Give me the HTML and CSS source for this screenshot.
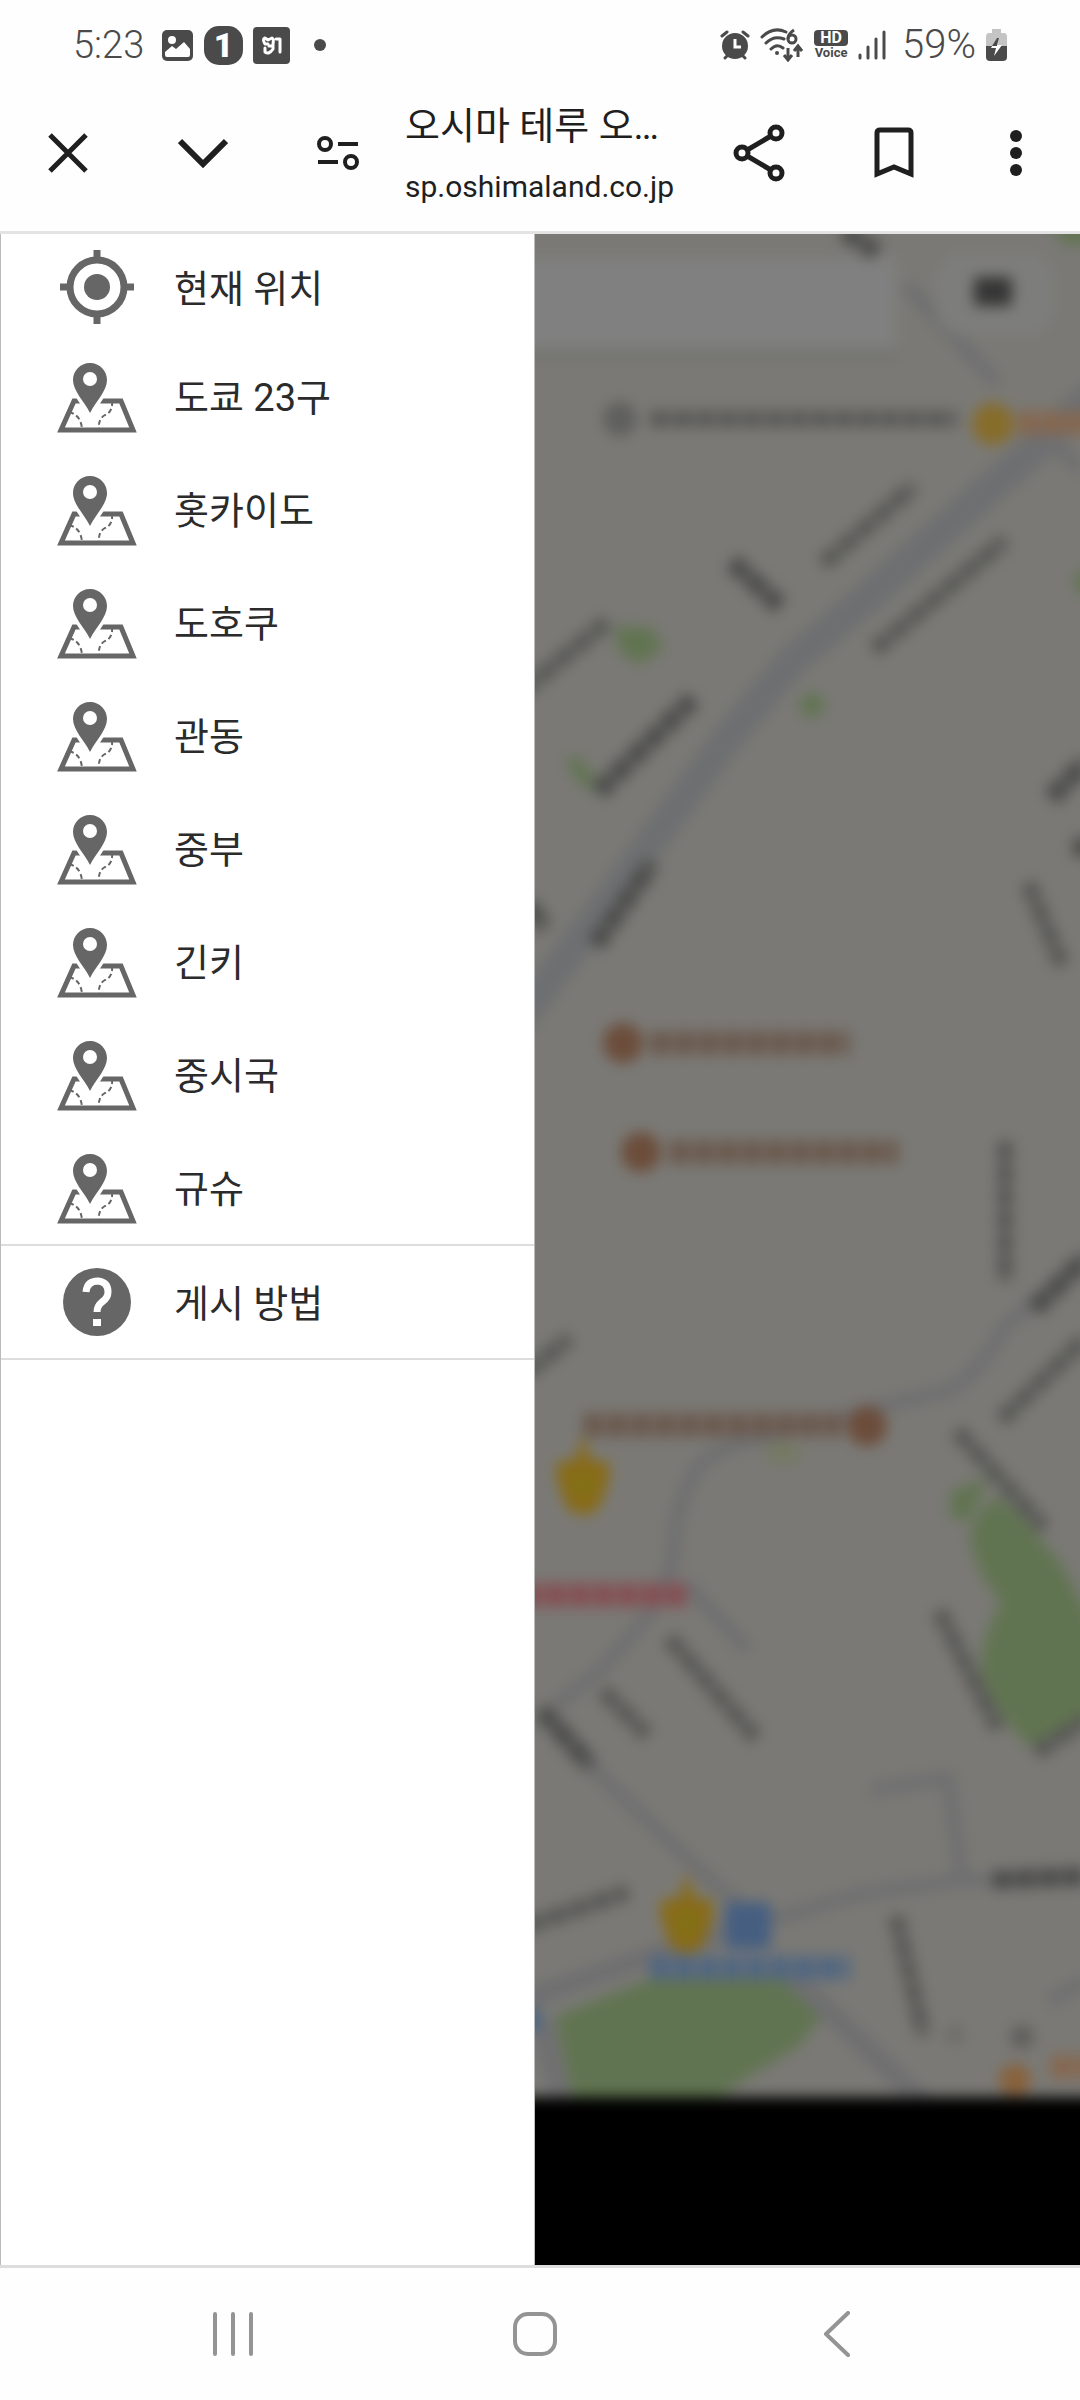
FILE: index.html
```html
<!DOCTYPE html>
<html lang="ko">
<head>
    <meta charset="UTF-8">
    <meta name="viewport" content="width=device-width, initial-scale=1.0">
    <title>오시마 테루</title>
    <link rel="stylesheet" href="styles.css">
</head>
<body>
    <!-- shared drawer icon -->
    <svg class="defs" width="0" height="0" aria-hidden="true">
        <symbol id="icon-map" viewBox="0 -1 80 72">
            <path d="M17 39H64L76 68H4Z" fill="none" stroke="#666" stroke-width="5"/>
            <path d="M12 50Q24 53 25 67M55 39Q56 50 48 53Q41 57 42 67" fill="none" stroke="#666" stroke-width="2" stroke-dasharray="5 3"/>
            <path d="M33 1C23 1 16 9 16 18C16 29 27 39 33 51C39 39 50 29 50 18C50 9 43 1 33 1Z" fill="#666" stroke="#fff" stroke-width="7" paint-order="stroke"/>
            <circle cx="33" cy="17" r="7" fill="#fff"/>
        </symbol>
    </svg>

    <div class="status-bar">
        <div class="status-left">
            <span class="status-text">5:23</span>
            <svg width="32" height="32" viewBox="0 0 32 32">
                <rect width="31" height="31" y="1" rx="5" fill="#4a4a4a"/>
                <circle cx="10" cy="11" r="4" fill="#fff"/>
                <path d="M3 23L10 17L14 20L22 13L28 20V26Q28 28 26 28H5Q3 28 3 26Z" fill="#fff"/>
            </svg>
            <span class="badge-one">1</span>
            <svg width="37" height="37" viewBox="0 0 37 37">
                <rect width="37" height="37" rx="4" fill="#4a4a4a"/>
                <path d="M15 17H12Q9 12 12 11L15 13L19 11Q21 12 20 17V22Q16 28 12 25V21M16 19H20M23 12H27V25" fill="none" stroke="#fff" stroke-width="3" stroke-linejoin="round" stroke-linecap="round"/>
            </svg>
            <span class="status-dot"></span>
        </div>
        <div class="status-right">
            <svg width="30" height="30" viewBox="0 0 30 30">
                <path d="M2 6L7 2M28 6L23 2M5 28L8 25M25 28L22 25" stroke="#4a4a4a" stroke-width="3" stroke-linecap="round"/>
                <circle cx="15" cy="16" r="13" fill="#4a4a4a"/>
                <path d="M15 9V17H21" fill="none" stroke="#fff" stroke-width="3"/>
            </svg>
            <svg width="44" height="34" viewBox="0 0 44 34">
                <path d="M2 9Q13 -2 26 4M6 15Q14 7 24 11M11 21Q17 15 23 20" fill="none" stroke="#4a4a4a" stroke-width="3" stroke-linecap="round"/>
                <circle cx="17" cy="25" r="2" fill="#4a4a4a"/>
                <path d="M34 2Q28 6 28 11" fill="none" stroke="#4a4a4a" stroke-width="3"/>
                <circle cx="32" cy="11" r="4" fill="none" stroke="#4a4a4a" stroke-width="3"/>
                <path d="M28 20V31M24 27L28 32L32 27M38 29V19M34 23L38 18L42 23" fill="none" stroke="#4a4a4a" stroke-width="3"/>
            </svg>
            <div class="hd-voice"><span class="hd">HD</span><span class="voice">Voice</span></div>
            <svg width="28" height="30" viewBox="0 0 28 30">
                <path d="M2 25V28M10 17V28M18 9V28M26 2V28" stroke="#4a4a4a" stroke-width="3" stroke-linecap="round"/>
            </svg>
            <span class="status-text battery-text">59%</span>
            <svg width="21" height="32" viewBox="0 0 21 32">
                <path d="M6 0H15V4H18Q21 4 21 8V18H0V8Q0 4 3 4H6Z" fill="#c4c4c4"/>
                <path d="M0 17H21V28Q21 32 17 32H4Q0 32 0 28Z" fill="#4a4a4a"/>
                <path d="M11 9L5 19H10L8 27L16 16H11L13 9Z" fill="#fff"/>
                <path d="M11 9L6 17H11V16L13 9Z" fill="#4a4a4a"/>
            </svg>
        </div>
    </div>

    <header class="toolbar">
        <button class="tool" aria-label="닫기">
            <svg width="40" height="40" viewBox="0 0 40 40"><path d="M2 2L38 38M38 2L2 38" stroke="#1f1f1f" stroke-width="5"/></svg>
        </button>
        <button class="tool" aria-label="접기">
            <svg width="50" height="30" viewBox="0 0 50 30"><path d="M2 3L25 26L48 3" fill="none" stroke="#1f1f1f" stroke-width="6"/></svg>
        </button>
        <button class="tool" aria-label="사이트 설정">
            <svg width="44" height="36" viewBox="0 0 44 36">
                <g fill="none" stroke="#1f1f1f" stroke-width="4">
                    <circle cx="9" cy="9" r="6"/>
                    <circle cx="35" cy="27" r="6"/>
                    <path d="M22 9H42M2 27H22"/>
                </g>
            </svg>
        </button>
        <div class="page-info">
            <div class="page-title">오시마 테루 오…</div>
            <div class="page-url">sp.oshimaland.co.jp</div>
        </div>
        <button class="tool" aria-label="공유">
            <svg width="52" height="58" viewBox="0 0 52 58">
                <path d="M43 9L9 29L43 49" fill="none" stroke="#1f1f1f" stroke-width="5"/>
                <g fill="#fff" stroke="#1f1f1f" stroke-width="5">
                    <circle cx="43" cy="9" r="6"/>
                    <circle cx="9" cy="29" r="6"/>
                    <circle cx="43" cy="49" r="6"/>
                </g>
            </svg>
        </button>
        <button class="tool" aria-label="북마크">
            <svg width="40" height="52" viewBox="0 0 40 52"><path d="M3 47V6Q3 3 6 3H34Q37 3 37 6V47L20 40Z" fill="none" stroke="#1f1f1f" stroke-width="5"/></svg>
        </button>
        <button class="tool tool-more" aria-label="메뉴">
            <svg width="12" height="48" viewBox="0 0 12 48" fill="#1f1f1f">
                <circle cx="6" cy="7" r="6"/>
                <circle cx="6" cy="24" r="6"/>
                <circle cx="6" cy="41" r="6"/>
            </svg>
        </button>
    </header>

    <main class="content">
        <nav class="drawer">
            <a class="item" href="#">
                <svg width="80" height="76" viewBox="0 0 80 76">
                    <circle cx="40" cy="38" r="27" fill="none" stroke="#666" stroke-width="7"/>
                    <circle cx="40" cy="38" r="13" fill="#666"/>
                    <path d="M40 1V10M40 66V75M3 38H12M68 38H77" stroke="#666" stroke-width="7"/>
                </svg>
                <span>현재 위치</span>
            </a>
            <a class="item" href="#"><svg width="80" height="72"><use href="#icon-map"/></svg><span>도쿄 23구</span></a>
            <a class="item" href="#"><svg width="80" height="72"><use href="#icon-map"/></svg><span>홋카이도</span></a>
            <a class="item" href="#"><svg width="80" height="72"><use href="#icon-map"/></svg><span>도호쿠</span></a>
            <a class="item" href="#"><svg width="80" height="72"><use href="#icon-map"/></svg><span>관동</span></a>
            <a class="item" href="#"><svg width="80" height="72"><use href="#icon-map"/></svg><span>중부</span></a>
            <a class="item" href="#"><svg width="80" height="72"><use href="#icon-map"/></svg><span>긴키</span></a>
            <a class="item" href="#"><svg width="80" height="72"><use href="#icon-map"/></svg><span>중시국</span></a>
            <a class="item" href="#"><svg width="80" height="72"><use href="#icon-map"/></svg><span>규슈</span></a>
            <a class="item item-help" href="#">
                <svg width="80" height="68" viewBox="0 0 80 68">
                    <circle cx="40" cy="34" r="34" fill="#666"/>
                    <path d="M29 24Q30 13 41 13Q51 14 51 24Q51 30 45 34Q40 38 40 44" fill="none" stroke="#fff" stroke-width="7"/>
                    <rect x="36" y="51" width="8" height="7" fill="#fff"/>
                </svg>
                <span>게시 방법</span>
            </a>
        </nav>

        <!-- map behind the drawer, dimmed and blurred -->
        <div class="map">
            <svg class="map-canvas" viewBox="534 234 546 2031" preserveAspectRatio="xMinYMin slice" aria-hidden="true">
                <defs>
                    <filter id="haze" filterUnits="userSpaceOnUse" x="440" y="140" width="740" height="2200" color-interpolation-filters="sRGB">
                        <feGaussianBlur stdDeviation="7"/>
                    </filter>
                </defs>
                <g filter="url(#haze)">
                    <rect x="440" y="140" width="740" height="1957" fill="#7a7975"/>
                    <!-- parks -->
                    <g fill="#617451">
                        <path d="M996 1496Q966 1520 970 1545Q980 1580 1000 1603Q978 1640 980 1673Q998 1720 1028 1746L1100 1710V1640L1060 1563L1021 1517Z"/>
                        <path d="M554 2016L646 1980H783Q810 1996 820 2018L797 2047L747 2077L700 2110H574Z"/>
                        <path d="M614 626L652 628L662 650L638 664L618 652Z"/>
                        <circle cx="811" cy="705" r="12"/>
                        <path d="M564 762L578 756L596 782L584 790Z"/>
                        <path d="M951 1490L987 1478L968 1522L948 1516Z"/>
                        <path d="M1048 225H1100V244H1064Z"/>
                        <circle cx="1086" cy="582" r="12"/>
                        <ellipse cx="782" cy="1453" rx="18" ry="10" fill="#747a60"/>
                    </g>
                    <!-- roads -->
                    <g class="roads">
                        <path class="road-main" d="M1110 380L1021 460L944 528L867 597L790 662L726 739L670 815L576 943L510 1030"/>
                        <path d="M905 285L996 383M1050 440L1080 470M1090 1255L1003 1327Q985 1365 950 1390L898 1402L740 1443Q695 1455 685 1490L676 1517L670 1570L646 1617L600 1670L555 1705"/>
                        <path d="M684 1583L747 1650M540 1710L590 1767L712 1883L745 1910M720 1925L775 1918L863 1893L961 1880H1090M870 1790L947 1778L960 1873"/>
                        <path class="road-wide" d="M520 2000L649 1957L720 1935M790 1975L930 2110M540 2020L560 2100"/>
                        <path d="M1048 2002L1085 1980"/>
                    </g>
                    <rect x="440" y="345" width="455" height="14" fill="#73736f"/>
                    <rect x="440" y="258" width="455" height="91" fill="#808080"/>
                    <rect x="934" y="252" width="120" height="84" rx="30" fill="#7d7d7b"/>
                    <rect x="973" y="277" width="38" height="29" rx="4" fill="#363636"/>
                    <!-- street names -->
                    <g class="labels">
                        <path d="M822 564L913 486M873 650L1004 540M520 692L606 622M649 419H956M1027 883L1061 965M1004 1141V1282"/>
                        <path d="M956 1431L1043 1528M1000 1420L1085 1338M938 1611L997 1729M668 1638L755 1738M602 1691L646 1735M1035 1753L1085 1720"/>
                        <path d="M525 1926L627 1892M895 1916L919 2020L922 2035M525 1373L569 1338"/>
                    </g>
                    <g class="labels labels-bold">
                        <path d="M731 562L779 606M597 792L692 699M594 945L651 863M1050 798L1085 762M525 905L544 927M1072 847H1090"/>
                        <path d="M1033 1309L1085 1258M540 1710L590 1766M992 1880L1085 1876M843 230L876 252"/>
                    </g>
                    <circle cx="619" cy="419" r="17" fill="#5f5f5d"/>
                    <circle cx="954" cy="2035" r="9" fill="#6b6b69"/>
                    <circle cx="1021" cy="2037" r="12" fill="#5f5f5d"/>
                    <!-- places -->
                    <g class="places">
                        <path d="M649 1043H849M668 1152H897M582 1425H841" stroke="#6b594e"/>
                        <path d="M520 1595H688" stroke="#854f53"/>
                        <path d="M649 1968H849M520 2020H540" stroke="#506681"/>
                        <path d="M1017 423H1090M1050 2067H1090" stroke="#86674e"/>
                    </g>
                    <g fill="#6c4d3b">
                        <circle cx="622" cy="1043" r="20"/>
                        <circle cx="640" cy="1152" r="20"/>
                        <circle cx="866" cy="1426" r="20"/>
                    </g>
                    <circle cx="992" cy="424" r="21" fill="#876d2b"/>
                    <circle cx="1014" cy="2080" r="16" fill="#88623c"/>
                    <rect x="724" y="1902" width="46" height="47" rx="6" fill="#465f81"/>
                    <g fill="#886b18">
                        <path d="M582 1434L590 1461H608V1480L599 1506Q582 1524 565 1506L556 1480V1461H574Z"/>
                        <path d="M686 1872L694 1899H712V1918L703 1944Q686 1962 669 1944L660 1918V1899H678Z"/>
                    </g>
                    <g fill="#7f7514">
                        <circle cx="582" cy="1485" r="9"/>
                        <circle cx="686" cy="1923" r="9"/>
                    </g>
                    <rect x="440" y="2097" width="740" height="240" fill="#000"/>
                </g>
            </svg>
        </div>
    </main>

    <footer class="nav-bar">
        <button class="nav-button" aria-label="최근 앱">
            <svg width="42" height="44" viewBox="0 0 42 44"><path d="M3 2V42M21 2V42M39 2V42" stroke="#949494" stroke-width="4" stroke-linecap="round"/></svg>
        </button>
        <button class="nav-button" aria-label="홈">
            <svg width="44" height="44" viewBox="0 0 44 44"><rect x="2" y="2" width="40" height="40" rx="13" fill="none" stroke="#949494" stroke-width="4"/></svg>
        </button>
        <button class="nav-button" aria-label="뒤로">
            <svg width="28" height="46" viewBox="0 0 28 46"><path d="M25 2L3 23L25 44" fill="none" stroke="#949494" stroke-width="4" stroke-linecap="round" stroke-linejoin="round"/></svg>
        </button>
    </footer>
</body>
</html>
```

FILE: styles.css
```css
body {
    font-family: Roboto, "Noto Sans CJK KR", sans-serif;
    background-color: #fefefe;
    color: #1f1f1f;
    margin: 0;
    min-height: 100vh;
    display: flex;
    flex-direction: column;
}
svg {
    display: block;
    flex-shrink: 0;
}
button {
    border: none;
    background: none;
    padding: 0;
    display: flex;
    align-items: center;
    justify-content: center;
    cursor: pointer;
}
.defs {
    position: absolute;
}

.status-bar {
    display: flex;
    justify-content: space-between;
    padding: 16px 73px 0 73px;
    height: 58px;
    color: #4a4a4a;
}
.status-left, .status-right {
    display: flex;
    align-items: center;
    gap: 10px;
}
.status-text {
    font-size: 38px;
    line-height: 48px;
    font-weight: 300;
    margin-right: 8px;
}
.battery-text {
    font-size: 40px;
    margin: 0 0 0 6px;
}
.badge-one {
    width: 39px;
    border-radius: 15px;
    background-color: #4a4a4a;
    color: #fff;
    font-size: 34px;
    line-height: 39px;
    font-weight: 900;
    text-align: center;
}
.status-dot {
    width: 12px;
    height: 12px;
    border-radius: 50%;
    background-color: #4a4a4a;
    margin-left: 14px;
}
.hd-voice {
    display: flex;
    flex-direction: column;
    align-items: center;
    font-weight: 700;
}
.hd {
    background-color: #4a4a4a;
    color: #fff;
    border-radius: 4px;
    font-size: 16px;
    line-height: 16px;
    width: 34px;
    text-align: center;
}
.voice {
    font-size: 13px;
    line-height: 14px;
}

.toolbar {
    display: flex;
    align-items: center;
    height: 157px;
    padding-right: 9px;
    border-bottom: 3px solid #e3e3e3;
}
.tool {
    width: 135px;
    height: 100%;
}
.tool-more {
    width: 110px;
}
.page-info {
    flex: 1;
    min-width: 0;
    padding-top: 10px;
    white-space: nowrap;
}
.page-title {
    font-size: 38px;
    line-height: 58px;
}
.page-url {
    font-size: 30px;
    line-height: 64px;
}

.content {
    flex: 1;
    display: flex;
}
.drawer {
    width: 49.5%;
    box-sizing: border-box;
    background-color: #fff;
    border-left: 1px solid #bbb;
    border-right: 1px solid #bbb;
}
.item {
    display: flex;
    align-items: center;
    gap: 37px;
    height: 113px;
    padding-left: 56px;
    color: #2b2b2b;
    font-size: 38px;
    text-decoration: none;
}
.item span {
    padding-bottom: 4px;
}
.item:first-child {
    height: 106px;
}
.item-help {
    height: 112px;
    border-top: 2px solid #ddd;
    border-bottom: 2px solid #ddd;
}

.map {
    flex: 1;
    position: relative;
    overflow: hidden;
    background-color: #000;
}
.map-canvas {
    position: absolute;
    width: 100%;
    height: 100%;
}
.roads {
    fill: none;
    stroke: #6f6f71;
    stroke-width: 14;
}
.road-main {
    stroke: #6e6f71;
    stroke-width: 32;
}
.road-wide {
    stroke-width: 20;
}
.labels {
    fill: none;
    stroke: #575755;
    stroke-width: 16;
    stroke-dasharray: 20 3;
}
.labels-bold {
    stroke: #4c4c4b;
    stroke-width: 19;
}
.places {
    fill: none;
    stroke-width: 24;
    stroke-dasharray: 21 3;
}

.nav-bar {
    display: grid;
    grid-template-columns: repeat(3, 1fr);
    height: 132px;
    padding: 0 92px 0 82px;
    border-top: 3px solid #ddd;
}
```
